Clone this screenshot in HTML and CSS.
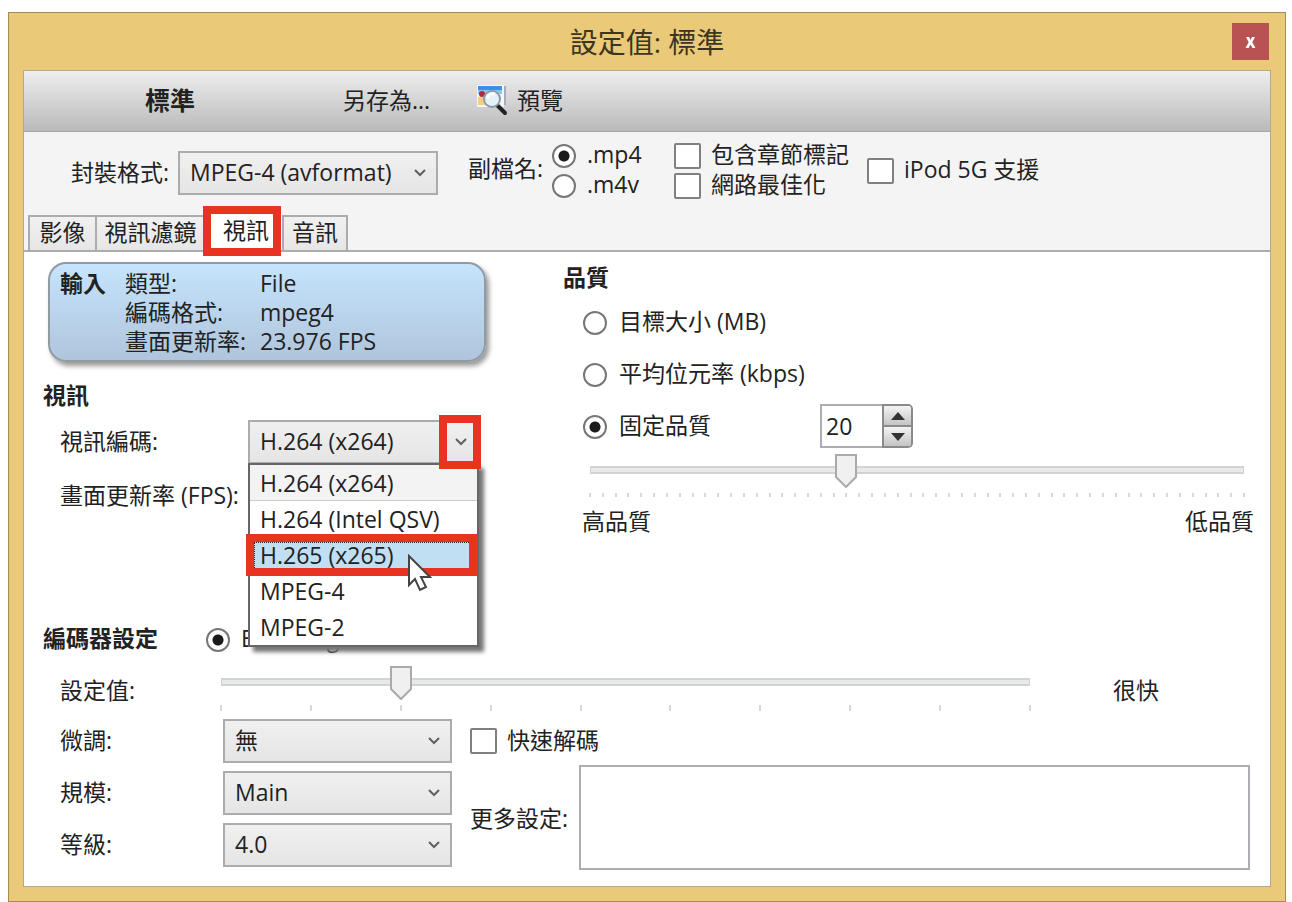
FILE: index.html
```
<!DOCTYPE html>
<html lang="zh-Hant">
<head>
	<meta charset="utf-8">
	<meta name="viewport" content="width=device-width, initial-scale=1">
	<title>設定值: 標準</title>
	<link rel="stylesheet" href="styles.css">
</head>
<body>

<div class="window">
	<header class="titlebar">
		<h1>設定值: 標準</h1>
		<button class="close" type="button" aria-label="關閉">
			<svg width="11" height="11" viewBox="0 0 11 11"><path d="M1 0h3l1.500 3L7 0h3L7.300 5.300 10.500 11h-3l-2-3.500-2 3.500h-3L3.700 5.300z" fill="#fff"/></svg>
		</button>
	</header>

	<div class="client">
		<div class="toolbar">
			<strong class="preset-name">標準</strong>
			<button class="tool save-as" type="button">另存為...</button>
			<button class="tool preview" type="button">
				<svg width="32" height="32" viewBox="0 0 32 32">
					<path d="M1 1h27v22H1z" fill="#f4f6f8"/>
					<path d="M28 2h2v19h-2z" fill="#aab"/>
					<path d="M2 2h24v5H2z" fill="#3f8fe0"/>
					<path d="M2 6h24v4H2z" fill="#8fc4f2"/>
					<path d="M2 13h9v8H2z" fill="#f3cf86"/>
					<circle cx="6" cy="10" r="3" fill="#b3263e"/>
					<path d="M21 21l8 8" stroke="#222" stroke-width="4" stroke-linecap="round"/>
					<circle cx="16" cy="15" r="8" fill="#e4f0fa" stroke="#8f99a2" stroke-width="2"/>
					<path d="M11 14q3-5 8-4" stroke="#fff" stroke-width="3" fill="none"/>
				</svg>
				預覽
			</button>
		</div>

		<div class="format">
			<div class="container-field">
				<label for="container">封裝格式:</label>
				<select id="container" class="combo">
					<option>MPEG-4 (avformat)</option>
				</select>
			</div>
			<span class="ext-label" id="ext-label">副檔名:</span>
			<div class="stack" role="radiogroup" aria-labelledby="ext-label">
				<label><input type="radio" name="ext" checked> .mp4</label>
				<label><input type="radio" name="ext"> .m4v</label>
			</div>
			<div class="stack flags">
				<label><input type="checkbox"> 包含章節標記</label>
				<label><input type="checkbox"> 網路最佳化</label>
			</div>
			<label class="ipod"><input type="checkbox"> iPod 5G 支援</label>
		</div>

		<nav class="tabs" role="tablist">
			<button type="button" role="tab">影像</button>
			<button type="button" role="tab" class="wide">視訊濾鏡</button>
			<button type="button" role="tab" class="active" aria-selected="true">視訊<span class="mark mark-tab"></span></button>
			<button type="button" role="tab" class="last">音訊</button>
		</nav>

		<main class="page">
			<div class="columns">
				<section class="source">
					<div class="input-info">
						<strong>輸入</strong>
						<dl>
							<dt>類型:</dt><dd>File</dd>
							<dt>編碼格式:</dt><dd>mpeg4</dd>
							<dt>畫面更新率:</dt><dd>23.976 FPS</dd>
						</dl>
					</div>
					<h2>視訊</h2>
					<div class="row">
						<label for="codec">視訊編碼:</label>
						<div class="codec">
							<select id="codec" class="combo">
								<option>H.264 (x264)</option>
							</select>
							<span class="mark mark-arrow"></span>
							<ul class="list" role="listbox" aria-label="視訊編碼">
								<li class="current" role="option">H.264 (x264)</li>
								<li role="option">H.264 (Intel QSV)</li>
								<li class="hover" role="option" aria-selected="true">H.265 (x265)<span class="mark mark-item"></span></li>
								<li role="option">MPEG-4</li>
								<li role="option">MPEG-2</li>
							</ul>
							<svg class="cursor" width="26" height="38" viewBox="0 0 26 38"><path d="M2 2v29l6-6 5 11 6-3-5-10h9z" fill="#fff" stroke="#444" stroke-width="2"/></svg>
						</div>
					</div>
					<div class="row fps"><span>畫面更新率 (FPS):</span></div>
				</section>

				<section class="quality">
					<h2>品質</h2>
					<label class="mode"><input type="radio" name="quality"> 目標大小 (MB)</label>
					<label class="mode"><input type="radio" name="quality"> 平均位元率 (kbps)</label>
					<div class="constant">
						<label class="mode"><input type="radio" name="quality" checked> 固定品質</label>
						<div class="spinner">
							<input type="text" inputmode="numeric" value="20" aria-label="品質值">
							<div class="spin-buttons">
								<button type="button" aria-label="增加"><svg width="14" height="8" viewBox="0 0 14 8"><path d="M7 0l7 8H0z" fill="#333"/></svg></button>
								<button type="button" aria-label="減少"><svg width="14" height="8" viewBox="0 0 14 8"><path d="M7 8l7-8H0z" fill="#333"/></svg></button>
							</div>
						</div>
					</div>
					<div class="slider">
						<input type="range" min="0" max="51" value="20" aria-label="固定品質">
						<div class="ticks fine"></div>
					</div>
					<div class="ends"><span>高品質</span><span>低品質</span></div>
				</section>
			</div>

			<section class="encoder">
				<div class="encoder-head">
					<h2>編碼器設定</h2>
					<label class="mode"><input type="radio" name="encoder" checked> Encoding</label>
				</div>
				<div class="speed">
					<label for="speed">設定值:</label>
					<div class="slider">
						<input id="speed" type="range" min="0" max="9" value="2">
						<div class="ticks"></div>
					</div>
					<output for="speed">很快</output>
				</div>
				<div class="options">
					<div class="combos">
						<label for="tune">微調:</label>
						<select id="tune" class="combo"><option>無</option></select>
						<label for="profile">規模:</label>
						<select id="profile" class="combo"><option>Main</option></select>
						<label for="level">等級:</label>
						<select id="level" class="combo"><option>4.0</option></select>
					</div>
					<div class="extra">
						<label class="fast"><input type="checkbox"> 快速解碼</label>
						<div class="more">
							<label for="more">更多設定:</label>
							<textarea id="more"></textarea>
						</div>
					</div>
				</div>
			</section>
		</main>
	</div>
</div>

</body>
</html>
```
FILE: styles.css
```
*{box-sizing:border-box;}
body{
	margin:0;
	padding:12px 6px 0 8px;
	background:#fff;
	color:#222;
	font:23px/30px "Open Sans","Noto Sans CJK TC",sans-serif;
}
button,input,select,textarea{font:inherit;color:inherit;margin:0;}
h1,h2,ul,dl,dd{margin:0;padding:0;}
h2{font-size:23px;font-weight:700;line-height:30px;}
label{white-space:nowrap;}

.window{
	min-height:calc(100vh - 12px);
	padding:0 14px 14px;
	border:1px solid #a08c55;
	background:#eaca78;
	display:flex;
	flex-direction:column;
}
.titlebar{
	height:57px;
	display:grid;
	grid-template-columns:1fr auto 1fr;
	align-items:center;
}
.titlebar h1{
	grid-column:2;
	font-size:28px;
	font-weight:400;
	color:#3d3520;
}
.close{
	justify-self:end;
	width:37px;
	height:37px;
	margin-right:2px;
	padding:0 0 5px;
	border:0;
	background:#b95353;
}
.client{
	flex:1;
	display:flex;
	flex-direction:column;
	border:1px solid #b3a98c;
	background:#f4f4f4;
}

.toolbar{
	height:61px;
	display:flex;
	align-items:center;
	padding:0 0 2px 121px;
	border-bottom:1px solid #a6a6a6;
	background:linear-gradient(#eee,#bababa);
}
.preset-name{width:198px;font-size:25px;}
.tool{
	padding:0;
	border:0;
	background:none;
	display:flex;
	align-items:center;
	gap:9px;
}
.save-as{width:133px;}

.format{
	height:82px;
	display:flex;
	align-items:center;
	padding:0 0 8px 47px;
}
.container-field{
	width:367px;
	margin:8px 30px 0 0;
	display:flex;
	align-items:center;
}
.container-field label{flex:none;width:107px;padding-bottom:2px;}
.combo{
	appearance:none;
	width:100%;
	height:44px;
	padding:0 30px 2px 10px;
	border:2px solid #acacac;
	border-radius:0;
	background:url("data:image/svg+xml,%3Csvg xmlns='http://www.w3.org/2000/svg' width='12' height='9'%3E%3Cpath d='M1 1l5 5 5-5' fill='none' stroke='%23606060' stroke-width='2'/%3E%3C/svg%3E") no-repeat right 10px center,linear-gradient(#f0f0f0,#e5e5e5);
}
.ext-label{width:84px;padding-bottom:2px;white-space:nowrap;}
.stack{display:flex;flex-direction:column;width:122px;}
.stack label,.ipod,.mode,.fast{display:flex;align-items:center;gap:11px;}
.flags{width:193px;}
.flags label,.ipod,.fast{gap:10px;}

input[type=radio]{
	appearance:none;
	flex:none;
	width:24px;
	height:24px;
	margin-top:3px;
	border:2px solid #777;
	border-radius:50%;
	background:#fff;
}
input[type=radio]:checked{background:radial-gradient(circle,#1a1a1a 5px,#fff 6px);}
input[type=checkbox]{
	appearance:none;
	flex:none;
	width:27px;
	height:26px;
	margin-top:3px;
	border:2px solid #808080;
	border-radius:2px;
	background:#fff;
}

.tabs{
	height:38px;
	display:flex;
	align-items:flex-end;
	padding-left:4px;
	border-bottom:2px solid #acacac;
}
.tabs button{
	height:35px;
	width:69px;
	padding:0 0 4px;
	border:2px solid #acacac;
	border-bottom:0;
	background:linear-gradient(#f1f1f1,#e6e6e6);
	white-space:nowrap;
}
.tabs .wide{width:109px;border-left:0;}
.tabs .active{
	position:relative;
	width:76px;
	height:37px;
	border:0;
	padding-left:4px;
	background:#fff;
}
.tabs .last{width:66px;}

/* red highlight frames */
.mark{
	position:absolute;
	border:8px solid #e83323;
	pointer-events:none;
}
.mark-tab{inset:-7px 1px -6px -3px;}
.mark-arrow{top:-5px;right:-2px;width:42px;height:54px;z-index:3;}
.mark-item{inset:-3px 0 -3px -4px;}

.page{
	flex:1;
	padding:10px 16px 14px 19px;
	background:#fff;
}
.columns{
	display:grid;
	grid-template-columns:520px 1fr;
}
.input-info{
	width:438px;
	height:100px;
	margin-left:5px;
	padding:4px 10px;
	display:flex;
	border:2px solid #8f9aa3;
	border-radius:18px;
	background:linear-gradient(#c6e4fd,#afc5dc);
	box-shadow:3px 4px 5px #999;
}
.input-info strong{width:65px;}
.input-info dl{
	display:grid;
	grid-template-columns:135px auto;
	grid-auto-rows:29px;
}
.source h2{margin-top:18px;}
.row{
	height:44px;
	margin:10px 0 10px 17px;
	display:flex;
	align-items:center;
}
.row label{width:188px;padding-bottom:2px;}
.codec{position:relative;width:231px;}
.codec .combo{display:block;}
.fps{margin:0 0 0 17px;padding-bottom:2px;}
.list{
	position:absolute;
	top:43px;
	left:0;
	z-index:2;
	width:231px;
	border:2px solid #666;
	background:#fff;
	list-style:none;
	box-shadow:5px 5px 4px #777;
}
.list li{position:relative;height:36px;padding-left:10px;line-height:36px;white-space:nowrap;}
.list .current{background:#f3f3f3;border-bottom:1px solid #ccc;}
.list .hover{background:#c0dff2;}
.list .hover::before{
	content:"";
	position:absolute;
	inset:5px 4px;
	border:1px dotted #222;
	border-width:1px 0 0 1px;
}
.cursor{position:absolute;top:134px;left:159px;z-index:4;}

.mode{height:52px;}
.quality .mode{margin-left:20px;gap:12px;}
.quality h2 + .mode{margin-top:3px;}
.constant{display:flex;align-items:center;}
.constant .mode{width:237px;}
.spinner{display:flex;height:44px;margin-top:2px;}
.spinner input{
	width:62px;
	padding:0 0 0 4px;
	border:2px solid #abadb3;
	border-right:0;
	background:#fff;
}
.spin-buttons{
	width:31px;
	display:flex;
	flex-direction:column;
	border:2px solid #8a8a8a;
	border-radius:0 5px 5px 0;
	overflow:hidden;
}
.spin-buttons button{
	flex:1;
	display:flex;
	align-items:center;
	justify-content:center;
	padding:0;
	border:0;
	background:linear-gradient(#f4f4f4,#c4c4c4);
}
.spin-buttons button + button{border-top:2px solid #8a8a8a;}

/* the input is wider than the track by half a thumb on each side */
.slider{padding:0 11px;}
.slider input{
	appearance:none;
	display:block;
	width:calc(100% + 22px);
	height:34px;
	margin:0 -11px;
	background:linear-gradient(#e7eaea,#e7eaea) center 14px / calc(100% - 24px) 4px no-repeat,linear-gradient(#d3d3d3,#d3d3d3) center 12px / calc(100% - 22px) 8px no-repeat;
}
.slider input::-webkit-slider-thumb{
	appearance:none;
	width:22px;
	height:34px;
	background:url("data:image/svg+xml,%3Csvg xmlns='http://www.w3.org/2000/svg' width='22' height='34'%3E%3Cpath d='M1 1h20v22L11 33 1 23z' fill='%23f0f0f0' stroke='%23aaa' stroke-width='2'/%3E%3C/svg%3E") no-repeat;
}
.ticks{
	height:6px;
	margin:5px -1px 0;
	background:repeating-linear-gradient(90deg,#d8d8d8 0 2px,transparent 2px calc((100% - 2px) / 9));
}
.ticks.fine{
	height:4px;
	background:repeating-linear-gradient(90deg,#d8d8d8 0 2px,transparent 2px calc((100% - 2px) / 51));
}
.quality .slider{margin:3px -1px 0 16px;}
.ends{
	display:flex;
	justify-content:space-between;
	margin:9px 0 0 19px;
}

.encoder{margin-top:87px;}
.encoder-head{display:flex;align-items:center;height:30px;}
.encoder-head h2{width:163px;}
.speed{
	height:50px;
	margin:10px 0 6px 17px;
	display:flex;
	align-items:center;
}
.speed label,.speed output{padding-top:4px;}
.speed label{width:150px;}
.speed .slider{flex:1;}
.speed output{width:141px;margin-left:72px;}
.options{display:flex;align-items:flex-start;margin-left:17px;}
.combos{
	display:grid;
	grid-template-columns:163px 229px;
	row-gap:8px;
	align-items:center;
}
.combos label{padding-bottom:2px;}
.extra{flex:1;margin-left:18px;padding-right:4px;}
.fast{height:41px;}
.more{display:flex;align-items:center;margin-top:5px;}
.more label{width:109px;}
.more textarea{
	flex:1;
	min-width:0;
	height:105px;
	padding:4px;
	border:2px solid #abadb3;
	background:#fff;
	resize:none;
}
```
